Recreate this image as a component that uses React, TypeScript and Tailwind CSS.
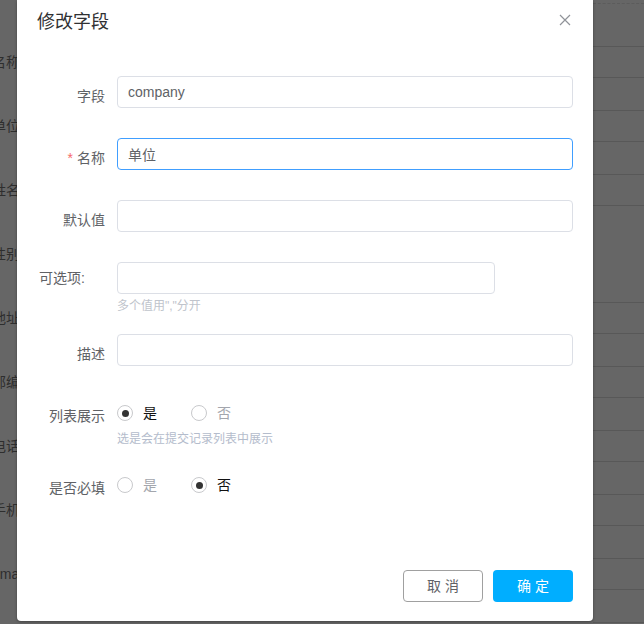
/* ── background page (dimmed by the mask) ─────────────── */
const SIDE_LABELS = ['名称', '单位', '姓名', '性别', '地址', '邮编', '电话', '手机', 'email'];

const ROW_H = [
  'h-[43px]', 'h-[31px]', 'h-[33px]', 'h-[31px]', 'h-[33px]', 'h-[31px]', 'h-[97px]',
  'h-[31px]', 'h-[33px]', 'h-[31px]', 'h-[33px]', 'h-[31px]', 'h-[33px]', 'h-[31px]',
  'h-[33px]', 'h-[31px]', 'h-[33px]',
];

function Radio({ checked, label }: { checked: boolean; label: string }) {
  return (
    <label className="flex items-center gap-[10px] cursor-pointer">
      <span className="w-4 h-4 rounded-full border border-[#c8c9cc] bg-white flex items-center justify-center">
        {checked && <span className="w-[7px] h-[7px] rounded-full bg-[#333333]" />}
      </span>
      <span className={checked ? 'text-[14px] text-[#111111]' : 'text-[14px] text-[#a3a6ad]'}>{label}</span>
    </label>
  );
}

function Field({ label, required, value, focused }: {
  label: string; required?: boolean; value?: string; focused?: boolean;
}) {
  return (
    <div className="flex">
      <div className="w-20 h-8 shrink-0 pr-3 pt-2 text-right text-[14px] leading-6 text-[#606266]">
        {required && <span className="text-[#f56c6c] mr-1">*</span>}
        {label}
      </div>
      <input
        defaultValue={value}
        className={`flex-1 h-8 rounded border bg-white px-[10px] text-[14px] text-[#606266] outline-none ${
          focused ? 'border-[#409eff]' : 'border-[#dcdfe6]'
        }`}
      />
    </div>
  );
}

export default function App() {
  return (
    <div className="relative w-[644px] h-[624px] overflow-hidden bg-[#666666] font-['Liberation_Sans','Noto_Sans_CJK_SC',sans-serif]">

      {/* page behind the mask */}
      <div className="flex justify-between h-full">
        <div className="-ml-[8px] pt-[30px] flex flex-col">
          {SIDE_LABELS.map(t => (
            <div key={t} className="h-16 flex items-center text-[14px] text-[#2e2e2e] whitespace-nowrap">{t}</div>
          ))}
        </div>
        <div className="w-[51px] flex flex-col">
          <div className="h-[4px] border-b border-dashed border-[#5c5c5c]" />
          {ROW_H.map((h, i) => (
            <div key={i} className={`${h} shrink-0 border-b border-[#585858]`} />
          ))}
        </div>
      </div>

      {/* dialog */}
      <div className="absolute left-[17px] top-0 w-[576px] h-[621px] bg-white rounded-b-sm shadow-[0_1px_3px_rgba(0,0,0,0.35)] flex flex-col">
        <div className="pl-5 pt-[10px]">
          <h2 className="text-[18px] leading-6 text-[#303133]">修改字段</h2>
        </div>
        <button className="absolute top-[14px] right-[22px] text-[#909399]">
          <svg width="12" height="12" viewBox="0 0 12 12" fill="none" stroke="currentColor" strokeWidth="1.2">
            <path d="M1 1L11 11M11 1L1 11" />
          </svg>
        </button>

        <div className="px-5 pt-[42px] flex flex-col">
          <Field label="字段" value="company" />
          <div className="mt-[30px]"><Field label="名称" required value="单位" focused /></div>
          <div className="mt-[30px]"><Field label="默认值" /></div>

          <div className="mt-[30px] flex">
            <div className="w-20 shrink-0 pr-[32px] text-right text-[14px] leading-8 text-[#606266]">可选项:</div>
            <div className="flex flex-col">
              <input className="w-[378px] h-8 rounded border border-[#dcdfe6] bg-white px-[10px] text-[14px] outline-none" />
              <p className="mt-1 text-[12px] leading-4 text-[#c0c4cc]">多个值用&quot;,&quot;分开</p>
            </div>
          </div>

          <div className="mt-5"><Field label="描述" /></div>

          <div className="mt-[31px] flex">
            <div className="w-20 h-8 shrink-0 pr-3 pt-[7px] text-right text-[14px] leading-[25px] text-[#606266]">列表展示</div>
            <div className="flex flex-col">
              <div className="h-8 flex items-center gap-[34px]">
                <Radio checked label="是" />
                <Radio checked={false} label="否" />
              </div>
              <p className="mt-[2px] text-[12px] leading-4 text-[#b4bccc]">选是会在提交记录列表中展示</p>
            </div>
          </div>

          <div className="mt-[22px] flex">
            <div className="w-20 h-8 shrink-0 pr-3 pt-[7px] text-right text-[14px] leading-[25px] text-[#606266]">是否必填</div>
            <div className="h-8 flex items-center gap-[34px]">
              <Radio checked={false} label="是" />
              <Radio checked label="否" />
            </div>
          </div>
        </div>

        <div className="mt-auto px-5 pb-[19px] flex justify-end gap-[10px]">
          <button className="w-20 h-8 rounded border border-[#a0a0a0] bg-white text-[14px] text-[#606266]">取 消</button>
          <button className="w-20 h-8 rounded bg-[#00aeff] text-[14px] text-white">确 定</button>
        </div>
      </div>
    </div>
  );
}
